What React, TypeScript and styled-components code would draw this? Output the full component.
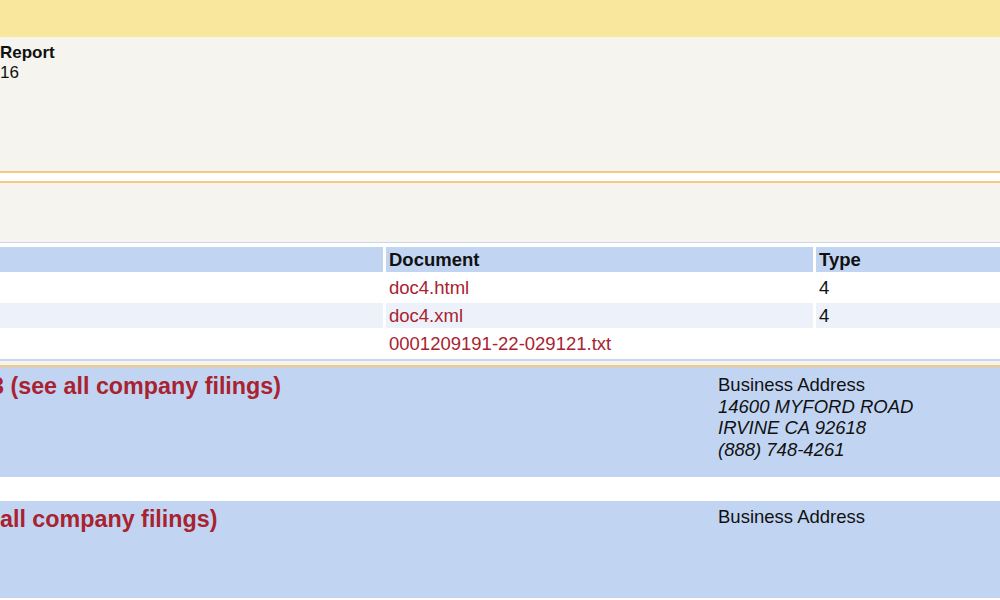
import React from "react";
import styled, { createGlobalStyle } from "styled-components";

const GlobalStyle = createGlobalStyle`
  html, body {
    margin: 0;
    padding: 0;
    background: #ffffff;
  }
  body {
    font-family: "Liberation Sans", Arial, Helvetica, sans-serif;
    color: #111111;
    font-size: 18.5px;
  }
`;

const Page = styled.div`
  width: 1000px;
  height: 600px;
  overflow: hidden;
  background: #ffffff;
`;

const TopBar = styled.header`
  height: 37px;
  background: #f8e79c;
`;

const InfoSection = styled.section`
  height: 136px;
  background: #f5f4ee;
  border-bottom: 2px solid #f5c97e;
  padding-top: 6px;
  box-sizing: border-box;
`;

const InfoHead = styled.div`
  font-weight: bold;
  font-size: 17px;
  line-height: 20px;
`;

const Info = styled.div`
  font-size: 17px;
  line-height: 20px;
`;

const Gap = styled.div<{ $h: number }>`
  height: ${(p) => p.$h}px;
  background: #ffffff;
`;

const FileSection = styled.section`
  background: #f5f4ee;
  border-top: 2px solid #f5c97e;
  border-bottom: 2px solid #f5c97e;
  padding-top: 59px;
  padding-bottom: 4px;
`;

const Table = styled.div`
  margin-left: -100px;
  width: 1100px;
  background: #ffffff;
  border-top: 1px solid #c7d7ee;
  border-bottom: 2px solid #c7d7ee;
  padding: 4px 0 3px;
  display: grid;
  grid-template-columns: 483px 427px 1fr;
  column-gap: 3px;
  row-gap: 3px;
`;

const HeadCell = styled.div`
  background: #c1d5f3;
  height: 25px;
  line-height: 25px;
  font-weight: bold;
  font-size: 18.5px;
  padding-left: 3px;
`;

const Cell = styled.div<{ $stripe?: boolean }>`
  background: ${(p) => (p.$stripe ? "#edf2fa" : "#ffffff")};
  height: 25px;
  line-height: 25px;
  font-size: 18.5px;
  padding-left: 3px;
  white-space: nowrap;
`;

const DocLink = styled.a`
  color: #a8232f;
  text-decoration: none;
`;

const CompanyPanel = styled.section<{ $h: number; $pt: number }>`
  height: ${(p) => p.$h}px;
  box-sizing: border-box;
  padding-top: ${(p) => p.$pt}px;
  background: #c1d5f3;
  display: grid;
  grid-template-columns: 718px 1fr;
  align-items: start;
`;

const CompanyName = styled.a<{ $shift: number; $dy: number }>`
  display: block;
  margin-left: ${(p) => p.$shift}px;
  margin-top: ${(p) => p.$dy}px;
  color: #a8232f;
  font-weight: bold;
  font-size: 23.3px;
  line-height: 26px;
  white-space: nowrap;
  text-decoration: none;
`;

const Address = styled.div`
  font-size: 18.5px;
  line-height: 21.7px;
`;

const AddressLine = styled.div`
  font-style: italic;
`;

const rows = [
  { doc: "doc4.html", type: "4" },
  { doc: "doc4.xml", type: "4" },
  { doc: "0001209191-22-029121.txt", type: "" },
];

export default function App() {
  return (
    <>
      <GlobalStyle />
      <Page>
        <TopBar />
        <InfoSection>
          <InfoHead>Report</InfoHead>
          <Info>16</Info>
        </InfoSection>
        <Gap $h={8} />
        <FileSection>
          <Table>
            <HeadCell />
            <HeadCell>Document</HeadCell>
            <HeadCell>Type</HeadCell>
            {rows.map((r, i) => (
              <React.Fragment key={r.doc}>
                <Cell $stripe={i % 2 === 1} />
                <Cell $stripe={i % 2 === 1}>
                  <DocLink href="#">{r.doc}</DocLink>
                </Cell>
                <Cell $stripe={i % 2 === 1}>{r.type}</Cell>
              </React.Fragment>
            ))}
          </Table>
        </FileSection>
        <CompanyPanel $h={110} $pt={7}>
          <CompanyName href="#" $shift={-9} $dy={-1}>
            3 (see all company filings)
          </CompanyName>
          <Address>
            <div>Business Address</div>
            <AddressLine>14600 MYFORD ROAD</AddressLine>
            <AddressLine>IRVINE CA 92618</AddressLine>
            <AddressLine>(888) 748-4261</AddressLine>
          </Address>
        </CompanyPanel>
        <Gap $h={24} />
        <CompanyPanel $h={97} $pt={5}>
          <CompanyName href="#" $shift={0} $dy={0}>
            all company filings)
          </CompanyName>
          <Address>
            <div>Business Address</div>
          </Address>
        </CompanyPanel>
      </Page>
    </>
  );
}
